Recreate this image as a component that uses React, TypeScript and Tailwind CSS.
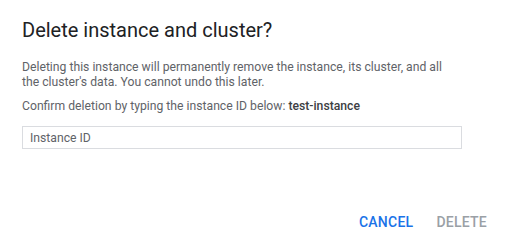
export default function App() {
  return (
    <div className="w-[508px] h-[246px] bg-white font-['Roboto',sans-serif] flex flex-col">
      <div className="px-[22px] pt-[18px] w-[484px]">
        <h2 className="text-[20px] leading-6 text-[#202124]">Delete instance and cluster?</h2>

        <p className="mt-[18px] text-[12.2px] leading-[15px] text-[#5f6368]">
          Deleting this instance will permanently remove the instance, its cluster, and all the
          cluster's data. You cannot undo this later.
        </p>
        <p className="mt-[9px] text-[12.2px] leading-[15px] text-[#5f6368]">
          Confirm deletion by typing the instance ID below:{' '}
          <span className="font-medium text-[#3c4043]">test-instance</span>
        </p>

        <input
          type="text"
          placeholder="Instance ID"
          className="mt-[12px] w-[440px] h-[23px] border border-[#dadce0] px-[7px] text-[12.2px] text-[#202124] placeholder:text-[#5f6368] outline-none"
        />
      </div>

      {/* Actions */}
      <div className="mt-auto mb-[13px] flex justify-end items-center gap-[23px] pr-[21px]">
        <button className="text-[14px] font-medium tracking-[0.25px] text-[#1a73e8]">CANCEL</button>
        <button className="text-[14px] font-medium tracking-[0.25px] text-[#9aa0a6]" disabled>
          DELETE
        </button>
      </div>
    </div>
  );
}
